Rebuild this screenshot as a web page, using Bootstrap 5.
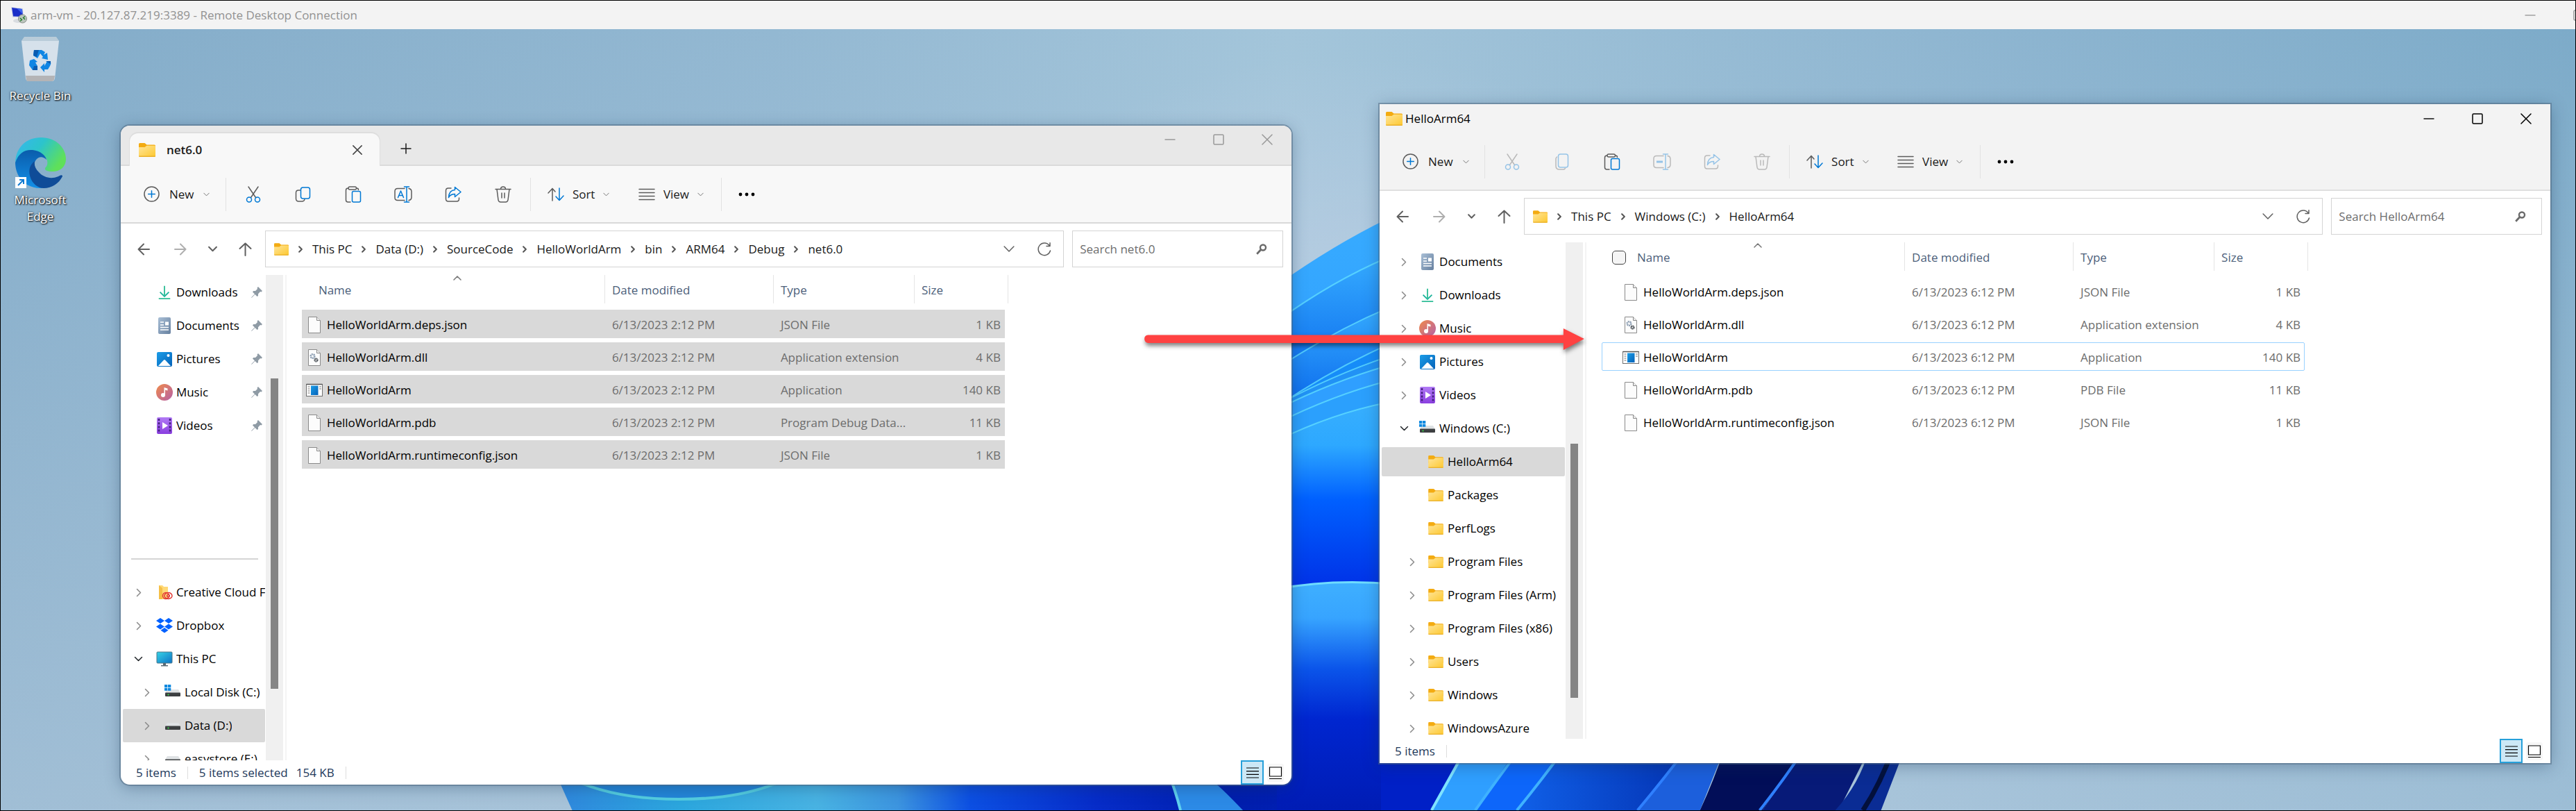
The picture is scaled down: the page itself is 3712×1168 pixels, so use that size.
<!DOCTYPE html>
<html lang="en">
<head>
<meta charset="utf-8">
<meta name="viewport" content="width=device-width, initial-scale=1">
<title>arm-vm - Remote Desktop Connection</title>
<link href="https://cdn.jsdelivr.net/npm/bootstrap@5.3.0/dist/css/bootstrap.min.css" rel="stylesheet">
<style>
  body { font-family: "Open Sans", "Noto Sans", sans-serif; font-size: 17px; line-height: 24px; color: #000; min-height: 100vh; border: 1px solid #000; overflow: hidden; }
  a { color: inherit; text-decoration: none; }
  button { border: 0; background: none; padding: 0; color: #1a1a1a; display: flex; align-items: center; }
  svg { flex: none; display: block; }
  .ln { fill: none; stroke: currentColor; stroke-width: var(--sw, 1.5); stroke-linecap: round; stroke-linejoin: round; vector-effect: non-scaling-stroke; }

  .session-bar { height: 41px; background: #f3f3f3; color: #929292; padding-left: 13px; overflow: hidden; }
  .session-bar button { color: #999; }
  .session-max { margin: 0 -13px 0 54px; }
  .desktop { position: relative; flex: 1; overflow: hidden; background: #8db2ce; }
  .wallpaper { position: absolute; inset: 0; width: 100%; height: 100%; }

  .shortcuts { position: relative; width: 114px; padding-top: 10px; }
  .shortcuts a { color: #fff; text-shadow: 1px 1px 2px #000, 0 0 3px rgba(0,0,0,.7); }

  .win { position: absolute; width: 45.48%; background: #fff; box-shadow: 0 0 0 2px rgba(80,105,130,.5), 0 4px 22px rgba(20,50,80,.35); overflow: hidden; }
  .win-source { left: 4.66%; top: 139px; bottom: 37px; border-radius: 13px; --bar: #f8f8f8; --nav-w: 209px; --nav-start: 13px; --nav-gap: 15px; --row-h: 48px; --row-m: 0px; --nav-pad: 1px; --thumb-top: 149px; --thumb-h: 447px; --cell-start: 6px; --rule: #d9d9d9; }
  .win-target { left: 53.56%; top: 108px; bottom: 68px; --bar: #f3f3f3; --nav-w: 268px; --nav-start: 22px; --nav-gap: 12px; --row-h: 42px; --row-m: 3px; --nav-pad: 4px; --thumb-top: 290px; --thumb-h: 366px; --cell-start: 30px; --rule: #e0e0e0; }
  .tabstrip, .caption, .toolbar, .address, .status { flex: none; }

  .tabstrip { height: 58px; background: #e8e8e8; box-shadow: inset 0 -2px #dadada; padding-left: 13px; color: #999; }
  .tab { width: 360px; height: 47px; background: #f8f8f8; border-radius: 12px 12px 0 0; box-shadow: 0 -1px 0 1px #dedede; padding: 0 25px 0 13px; font-weight: 600; color: #1a1a1a; clip-path: inset(-3px -3px 0 -3px); }
  .tab-close { color: #444; }
  .tab-add { margin-left: 30px; }
  .caption { height: 42px; background: var(--bar); padding-left: 9px; }
  .win-ctl button { width: 70px; height: 40px; justify-content: center; color: inherit; }

  .toolbar { height: 83px; background: var(--bar); border-bottom: 2px solid var(--rule); padding-left: 33px; color: #5c5c5c; }
  .toolbar button { height: 48px; }
  .toolbar .sep { width: 1px; height: 48px; background: #e2e2e2; }
  .toolbar .ico { width: 72px; justify-content: center; color: #5c5c5c; }
  .toolbar .dim { opacity: .38; }
  .w-new { width: 118px; gap: 14px; }
  .w-sort { width: 131px; gap: 12px; }
  .w-view { width: 119px; gap: 12px; }
  .toolbar .glyph { color: #5c5c5c; }
  .toolbar .chev { width: 9px; height: 6px; color: #777; --sw: 1; }
  .edit-group { margin: 0 3px; }

  .address { padding: 10px 12px 11px 18px; height: 74px; color: #606060; gap: 12px; }
  .history { width: 178px; gap: 31px; padding-left: 6px; --sw: 2; }
  .history button, .boxed button { color: inherit; }
  .boxed { height: 53px; border: 1px solid #d4d4d4; }
  .place { padding: 0 17px 0 12px; }
  .trail { color: #191919; gap: 14px; }
  .trail svg.gt { width: 6px; height: 10px; color: #555; --sw: 2; }
  .trail a { white-space: nowrap; }
  .search { width: 304px; padding: 0 22px 0 10px; }
  .search input { border: 0; outline: 0; min-width: 0; flex: 1; padding: 0; color: #6d6d6d; background: none; }
  .search input::placeholder { color: #6d6d6d; opacity: 1; }

  .panes { min-height: 0; }
  .tree { width: var(--nav-w); padding-top: var(--nav-pad); overflow: hidden; }
  .tree-row { height: var(--row-h); margin: var(--row-m) 1px var(--row-m) 3px; padding-left: var(--nav-start); border-radius: 2px; flex: none; }
  .tree-row .twist { width: 20px; margin-right: var(--nav-gap); color: #8a8a8a; display: flex; justify-content: center; flex: none; }
  .tree-row .pic { width: 24px; margin-right: 5px; display: flex; justify-content: center; flex: none; }
  .tree-row a { white-space: nowrap; overflow: hidden; }
  .tree-row.sub { padding-left: calc(var(--nav-start) + 12px); }
  .tree-row.current { background: #d9d9d9; }
  .tree-row .pin { margin-left: auto; margin-right: 4px; color: #8f9ba5; }
  .tree-gap { height: 144px; flex: none; }
  .tree-rule { height: 48px; flex: none; padding: 23px 11px 0 15px; }
  .tree-rule hr { margin: 0; border-top: 2px solid #d5d5d5; opacity: 1; }
  .track { width: 25px; background: #f0f0f0; }
  .thumb { width: 11px; height: var(--thumb-h); margin: var(--thumb-top) 0 0 7px; background: #858585; }
  .list-pane { border-left: 2px solid #f4f4f4; margin-left: 3px; padding-left: 22px; }

  .files { border-collapse: separate; border-spacing: 0; table-layout: fixed; width: 1018px; color: #6d6d6d; }
  .files th { padding: 0 0 9px; font-weight: 400; color: #4c607a; position: relative; }
  .files th > div { height: 41px; border-right: 1px solid #e5e5e5; padding: 3px 0 0 10px; display: flex; align-items: center; }
  .files th .caret { position: absolute; left: 50%; top: 1px; color: #777; }
  .files td { height: 47px; padding: 2px 0 0 10px; border-bottom: 6px solid transparent; background-clip: padding-box; white-space: nowrap; }
  .files td:last-child { border-right: 5px solid transparent; text-align: right; padding: 2px 6px 0 0; }
  .files td:first-child { padding-left: var(--cell-start); color: #000; }
  .files .fname { display: flex; align-items: center; gap: 6px; }
  .files .picked td { background-color: #d9d9d9; }
  .files .focused { position: relative; }
  .files .focused::after { content: ""; position: absolute; inset: 0 5px 6px 0; border: 1px solid #99d1ff; border-radius: 2px; }
  .files input { appearance: none; width: 20px; height: 20px; border: 1px solid #444; border-radius: 5px; background: #f5f5f5; margin: 0 16px 0 0; }
  .win-source th:first-child > div { padding-left: 24px; }
  .win-target th:first-child > div { padding-left: 15px; }

  .status { height: 35px; padding: 0 11px 0 22px; color: #1e395b; }
  .status .sep { width: 1px; height: 18px; background: #ddd; }
  .status button { height: 35px; justify-content: center; color: #000; }
  .status .on { width: 33px; background: #cce8f6; border: 2px solid #26a0da; margin-right: 5px; }
  .status .off { width: 24px; height: 26px; background: #f7f7f7; border-radius: 3px; }
  .annotation { position: absolute; left: 44.4%; width: 17.25%; top: 426px; overflow: visible; filter: drop-shadow(1px 4px 3px rgba(0,0,0,.5)); }
</style>
</head>
<body class="d-flex flex-column">

<svg width="0" height="0" class="position-absolute" aria-hidden="true">
  <defs>
    <linearGradient id="gFold" x1="0" y1="0" x2="1" y2="1"><stop offset="0" stop-color="#ffe59a"/><stop offset="1" stop-color="#fdc82f"/></linearGradient>
    <linearGradient id="gDoc" x1="0" y1="0" x2="1" y2="1"><stop offset="0" stop-color="#a9bfd6"/><stop offset="1" stop-color="#66809f"/></linearGradient>
    <linearGradient id="gPic" x1="0" y1="0" x2="1" y2="1"><stop offset="0" stop-color="#1b9de8"/><stop offset="1" stop-color="#0562b8"/></linearGradient>
    <linearGradient id="gMus" x1="0" y1="0" x2="1" y2="1"><stop offset="0" stop-color="#f08a4a"/><stop offset="1" stop-color="#b561a8"/></linearGradient>
    <linearGradient id="gVid" x1="0" y1="0" x2="0" y2="1"><stop offset="0" stop-color="#b17af5"/><stop offset="1" stop-color="#8a3ee0"/></linearGradient>
    <linearGradient id="gPc" x1="0" y1="0" x2="1" y2="1"><stop offset="0" stop-color="#35d3e6"/><stop offset="1" stop-color="#0d73c6"/></linearGradient>
    <symbol id="folder" viewBox="0 0 24 20"><path d="M0 1.500Q0 0 1.500 0H8.500L11.500 2.500H22.500Q24 2.500 24 4V12H0Z" fill="#f3ab12"/><path d="M0 6H8.500L11.500 3.700H22.800Q24 3.700 24 4.900V18.500Q24 20 22.500 20H1.500Q0 20 0 18.500Z" fill="url(#gFold)"/><path d="M0 18.500H24Q24 20 22.500 20H1.500Q0 20 0 18.500Z" fill="#eab02a"/></symbol>
    <symbol id="chev" viewBox="0 0 12 8"><path class="ln" d="M1 1.500 6 6.500 11 1.500"/></symbol>
    <symbol id="gt" viewBox="0 0 8 12"><path class="ln" d="M1.500 1 6.500 6 1.500 11"/></symbol>
    <symbol id="plus-circle" viewBox="0 0 24 24"><circle class="ln" cx="12" cy="12" r="11"/><path class="ln" d="M12 7V17M7 12H17" style="stroke:#0078d4"/></symbol>
    <symbol id="cut" viewBox="0 0 24 24"><path class="ln" d="M5 1 15.500 16.500M19 1 8.500 16.500"/><g style="color:#0078d4"><circle class="ln" cx="6" cy="19.500" r="3.500"/><circle class="ln" cx="18" cy="19.500" r="3.500"/></g></symbol>
    <symbol id="copy" viewBox="0 0 24 24"><path class="ln" d="M7.500 6H5Q1.500 6 1.500 9.500V18Q1.500 22 5.500 22H10Q13.500 22 14 19"/><rect class="ln" x="8.500" y="2" width="13" height="16" rx="3" style="stroke:#0078d4"/></symbol>
    <symbol id="copy2" viewBox="0 0 24 24"><path class="ln" d="M4.500 5Q3 6 3 8V18Q3 23 8 23H13Q15.500 23 16.500 21.500"/><rect class="ln" x="6.500" y="1" width="14" height="19" rx="3" style="stroke:#0078d4"/></symbol>
    <symbol id="paste" viewBox="0 0 24 24"><path class="ln" d="M5 3H4.500Q1.500 3 1.500 6V20Q1.500 23 4.500 23H8M17 3Q19.500 3 19.500 5.500M7 1H14.500Q16.500 1 16.500 3T14.500 5H7Q5 5 5 3T7 1"/><rect class="ln" x="10.500" y="7.500" width="12" height="15.500" rx="2" style="stroke:#0078d4"/></symbol>
    <symbol id="rename" viewBox="0 0 26 24"><path class="ln" d="M15 3.500H5Q1 3.500 1 7.500V16.500Q1 20.500 5 20.500H15M21 3.500Q25 4 25 8V16Q25 20 21 20.500"/><path class="ln" d="M18 1V23M14.500 1H21.500M14.500 23H21.500M5.500 16.500 9.500 7 13.500 16.500M7 13.500H12" style="stroke:#0078d4"/></symbol>
    <symbol id="rename2" viewBox="0 0 26 24"><path class="ln" d="M15 3.500H5Q1 3.500 1 7.500V16.500Q1 20.500 5 20.500H15M21 3.500Q25 4 25 8V16Q25 20 21 20.500"/><path class="ln" d="M18 1V23M14.500 1H21.500M14.500 23H21.500" style="stroke:#0078d4"/><path d="M5 10.500H14V13.500H5Z" fill="#0078d4"/></symbol>
    <symbol id="share" viewBox="0 0 24 24"><path class="ln" d="M9 3H5Q1.500 3 1.500 6.500V18.500Q1.500 22 5 22H17Q20.500 22 20.500 18.500V17"/><path class="ln" d="M14.500 1.500 23 8.500 14.500 15.500V11.500Q8 11.500 5.500 16.500 6 6 14.500 5.500Z" style="stroke:#0078d4"/></symbol>
    <symbol id="trash" viewBox="0 0 24 24"><path class="ln" d="M1 4.500H23M8.500 4.500Q8.500 1 12 1T15.500 4.500M3 4.500 5 20Q5.500 23 8.500 23H15.500Q18.500 23 19 20L21 4.500M10 10V17M14 10V17"/></symbol>
    <symbol id="sort" viewBox="0 0 24 20"><path class="ln" d="M7 19V1.500M1 8 7 1.500 11 6"/><path class="ln" d="M17 1V18.500M12 13 17 18.500 23 12" style="stroke:#0078d4"/></symbol>
    <symbol id="view" viewBox="0 0 24 18"><path class="ln" d="M1 1.500H23M1 6.500H23M1 11.500H23M1 16.500H23"/></symbol>
    <symbol id="more" viewBox="0 0 24 6"><circle cx="3" cy="3" r="2.400"/><circle cx="12" cy="3" r="2.400"/><circle cx="21" cy="3" r="2.400"/></symbol>
    <symbol id="left" viewBox="0 0 18 18"><path class="ln" d="M17 9H1.500M9 1.500 1.500 9 9 16.500"/></symbol>
    <symbol id="right" viewBox="0 0 18 18"><path class="ln" d="M1 9H16.500M9 1.500 16.500 9 9 16.500"/></symbol>
    <symbol id="up" viewBox="0 0 18 20"><path class="ln" d="M9 19V1.500M1 9 9 1.500 17 9"/></symbol>
    <symbol id="reload" viewBox="0 0 20 20"><path class="ln" d="M18.500 12A8.800 8.800 0 1 1 17 4.500M18 .8V5.500H13"/></symbol>
    <symbol id="lens" viewBox="0 0 16 16"><circle cx="10" cy="5.500" r="4" fill="none" stroke="#6a6a6a" stroke-width="2.400"/><path d="M7 8.500 1.200 14.800" stroke="#6a6a6a" stroke-width="2.800"/></symbol>
    <symbol id="minus" viewBox="0 0 16 16"><path d="M.5 8H15.500" stroke="currentColor" stroke-width="1.400"/></symbol>
    <symbol id="square" viewBox="0 0 16 16"><rect class="ln" x="1" y="1" width="14" height="14" rx="1.500"/></symbol>
    <symbol id="cross" viewBox="0 0 16 16"><path class="ln" d="M1 1 15 15M15 1 1 15"/></symbol>
    <symbol id="downloads" viewBox="0 0 24 24"><path d="M5 11.500 12 18.500 19 11.500" fill="none" stroke="#1fb59c" stroke-width="2"/><path d="M11 2H13V18H11ZM3 21H21V23H3Z" fill="#2ebd96"/></symbol>
    <symbol id="documents" viewBox="0 0 24 24"><rect x="3" width="18" height="24" rx="2" fill="url(#gDoc)"/><path d="M6 7H11M6 11H11M6 14.500H18M6 18H18" stroke="#fff" stroke-width="1.600"/><rect x="13" y="6.500" width="5" height="5" fill="#fff"/></symbol>
    <symbol id="pictures" viewBox="0 0 24 24"><rect x="1" y="2" width="22" height="21" rx="2" fill="url(#gPic)"/><path d="M3 22 11 13.500Q12 12.500 13 13.500L21 22Z" fill="#fff"/><circle cx="17.500" cy="7" r="2" fill="#fff"/></symbol>
    <symbol id="music" viewBox="0 0 24 24"><circle cx="12" cy="12" r="12" fill="url(#gMus)"/><circle cx="10" cy="16" r="3" fill="#fff"/><path d="M11.500 5 16.500 6.500V9.500L13 8.500V16H11.500Z" fill="#fff"/></symbol>
    <symbol id="videos" viewBox="0 0 24 24"><rect x="1" width="22" height="24" rx="2" fill="url(#gVid)"/><path d="M4 2V23M20 2V23" stroke="#43207c" stroke-width="2.500" stroke-dasharray="3 2.200"/><path d="M9 7 17 12 9 17Z" fill="#fff"/></symbol>
    <symbol id="pin" viewBox="0 0 16 16"><path d="M10 0 16 6 14.500 7.500 13 7 10 10.200 10 13 8.500 14 5.500 11 1 15.500 0 16 .5 15 5 10.500 2 7.500 3.200 6 6 6 9 3 8.500 1.500Z" fill="currentColor"/></symbol>
    <symbol id="ccloud" viewBox="0 0 24 24"><path d="M4 2H9L11 4H17V22H4Z" fill="#ffd978"/><path d="M4 2 9 6V22H4Z" fill="#f5bf47"/><g fill="none" stroke="#e23a35" stroke-width="1.500"><circle cx="14" cy="17" r="4.500"/><ellipse cx="17.500" cy="17" rx="5.500" ry="4.500"/><circle cx="17.500" cy="17" r="1.800"/></g></symbol>
    <symbol id="dropbox" viewBox="0 0 24 22"><path fill="#0061ff" d="M6 0 12 4 6 8 0 4ZM18 0 24 4 18 8 12 4ZM6 8.500 12 12.500 6 16.500 0 12.500ZM18 8.500 24 12.500 18 16.500 12 12.500ZM6.500 17.800 12 14 17.500 17.800 12 21.500Z"/></symbol>
    <symbol id="pc" viewBox="0 0 24 24"><rect x="1" y="2" width="22" height="16" rx="1" fill="url(#gPc)" stroke="#4b7688"/><path d="M10 18H14V21H17V22.500H7V21H10Z" fill="#5b6b75"/></symbol>
    <symbol id="drive" viewBox="0 0 24 24"><path d="M4 8H20L23 13H1Z" fill="#dfe2e4"/><rect x="1" y="12.500" width="22" height="5.500" rx="1" fill="#3c3f41"/><circle cx="5.500" cy="15.500" r="1.100" fill="#3be04a"/></symbol>
    <symbol id="sysdrive" viewBox="0 0 24 24"><path d="M4 8H20L23 13H1Z" fill="#dfe2e4"/><rect x="1" y="12.500" width="22" height="5.500" rx="1" fill="#3c3f41"/><circle cx="5.500" cy="15.500" r="1.100" fill="#3be04a"/><path d="M0 1H4.300V5H0ZM5 1H9.300V5H5ZM0 5.700H4.300V9.700H0ZM5 5.700H9.300V9.700H5Z" fill="#1089df"/></symbol>
    <symbol id="page" viewBox="0 0 24 24"><path d="M3.500.5H15.500L20.500 5.500V23.500H3.500Z" fill="#fcfcfc" stroke="#8a8a8a"/><path d="M15.500.5V5.500H20.500" fill="#eee" stroke="#8a8a8a"/></symbol>
    <symbol id="dll" viewBox="0 0 24 24"><use href="#page" width="24" height="24"/><circle cx="9.500" cy="10" r="2.800" fill="none" stroke="#8d9fb3" stroke-width="2.600" stroke-dasharray="2 .8"/><circle cx="14.500" cy="15.500" r="2" fill="none" stroke="#4c5258" stroke-width="2.200" stroke-dasharray="1.600 .5"/></symbol>
    <symbol id="exe" viewBox="0 0 24 24"><rect x=".5" y="3.500" width="23" height="17" fill="#fff" stroke="#707070"/><path d="M.5 3.500H23.500" stroke="#555" stroke-width="1.500"/><rect x="7" y="5.500" width="10.500" height="13.500" fill="url(#gPic)"/><path d="M2.500 7H5.500M2.500 10H5.500M2.500 13H5.500M2.500 16H5.500M19 7H22M19 10H22" stroke="#777" stroke-width="1"/></symbol>
    <symbol id="details" viewBox="0 0 20 20"><path d="M1 3H19M1 7.700H19M1 12.300H19M1 17H19" stroke="#000" stroke-width="1.200"/></symbol>
    <symbol id="tiles" viewBox="0 0 20 20"><path d="M1.500 2H18.500V15H1.500ZM1 18.500H19" fill="#fff" stroke="#000" stroke-width="1.200"/></symbol>
  </defs>
</svg>

<header class="session-bar d-flex align-items-center">
  <svg width="26" height="24" viewBox="0 0 26 24" aria-hidden="true"><path d="M2 0 19 2 20 15 4 15Z" fill="#d5d9e6"/><path d="M3 1 18 3 19 14 5 13.500Z" fill="#1c2fc8"/><path d="M10 2 18 3 18.500 10Z" fill="#3e66f0"/><ellipse cx="12" cy="20" rx="7" ry="3" fill="#d9dce0"/><circle cx="18.500" cy="17" r="6" fill="#bcc5bd" stroke="#8a918b"/><path d="M15 16 17.500 18.500 15 20.500M22 13.500 19.500 15.500 22 18" fill="none" stroke="#257d2c" stroke-width="1.400"/></svg>
  <span class="ms-1 me-auto">arm-vm - 20.127.87.219:3389 - Remote Desktop Connection</span>
  <button aria-label="Minimize session"><svg width="16" height="16"><use href="#minus"/></svg></button>
  <button aria-label="Restore session" class="session-max"><svg width="16" height="16"><use href="#square"/></svg></button>
</header>

<main class="desktop">
  <svg class="wallpaper" viewBox="0 42 3712 1126" preserveAspectRatio="none" aria-hidden="true">
    <defs>
      <linearGradient id="sky"><stop offset="0" stop-color="#83acc9"/><stop offset=".3" stop-color="#93b8d2"/><stop offset=".5" stop-color="#a3c5da"/><stop offset=".75" stop-color="#8fb6d1"/><stop offset="1" stop-color="#7dabc9"/></linearGradient>
      <linearGradient id="haze" x1="0" y1="0" x2="0" y2="1"><stop offset="0" stop-color="#c4d4e4" stop-opacity="0"/><stop offset="1" stop-color="#c4d4e4" stop-opacity=".45"/></linearGradient>
      <radialGradient id="glow"><stop offset="0" stop-color="#c4d2e8" stop-opacity=".5"/><stop offset="1" stop-color="#c4d2e8" stop-opacity="0"/></radialGradient>
      <linearGradient id="p1" x1="0" y1="0" x2="0" y2="1"><stop offset="0" stop-color="#37abff"/><stop offset="1" stop-color="#2f9dff"/></linearGradient>
      <linearGradient id="p2" x1="0" y1="0" x2="0" y2="1"><stop offset="0" stop-color="#35abff"/><stop offset=".65" stop-color="#0f70ee"/><stop offset="1" stop-color="#0a60e4"/></linearGradient>
      <linearGradient id="core" gradientUnits="userSpaceOnUse" x1="0" y1="590" x2="0" y2="850"><stop offset="0" stop-color="#36aefe"/><stop offset=".2" stop-color="#2da8ff"/><stop offset=".5" stop-color="#0060ff"/><stop offset="1" stop-color="#0030e6"/></linearGradient>
      <linearGradient id="low" gradientUnits="userSpaceOnUse" x1="0" y1="838" x2="0" y2="1168"><stop offset="0" stop-color="#3fb0ff"/><stop offset=".16" stop-color="#37a4ff"/><stop offset=".38" stop-color="#0b55ea"/><stop offset=".6" stop-color="#0026d0"/><stop offset="1" stop-color="#001cb4"/></linearGradient>
      <linearGradient id="floor" gradientUnits="userSpaceOnUse" x1="800" y1="0" x2="2100" y2="0"><stop offset="0" stop-color="#2f86dc"/><stop offset=".14" stop-color="#2ba6dd"/><stop offset=".29" stop-color="#48b2e2"/><stop offset=".38" stop-color="#3c94df"/><stop offset=".46" stop-color="#0c4fe2"/><stop offset=".6" stop-color="#062cc8"/><stop offset=".75" stop-color="#001eac"/><stop offset="1" stop-color="#0020c4"/></linearGradient>
      <linearGradient id="petal2"><stop offset="0" stop-color="#1060e8"/><stop offset="1" stop-color="#0434b4"/></linearGradient>
    </defs>
    <rect y="42" width="3712" height="1126" fill="url(#sky)"/>
    <rect y="42" width="3712" height="1126" fill="url(#haze)"/>
    <ellipse cx="1940" cy="420" rx="520" ry="340" fill="url(#glow)"/>
    <path d="M1840 411Q1920 354 2000 315V620H1840Z" fill="url(#p1)"/>
    <path d="M1840 463Q1920 405 2000 371V620H1840Z" fill="url(#p2)"/>
    <path d="M1840 531Q1920 478 2000 444V640H1840Z" fill="url(#p2)"/>
    <path d="M1840 586Q1920 532 2000 497V640H1840Z" fill="#168cf8"/>
    <path d="M1840 584Q1920 541 2000 514V640H1840Z" fill="#2192f5"/>
    <path d="M1840 590Q1920 550 2000 527V640H1840Z" fill="#2f9fff"/>
    <path d="M1840 610Q1920 570 2000 549V640H1840Z" fill="#2ba0fd"/>
    <path d="M1840 635Q1920 596 2000 580V860H1840Z" fill="url(#core)"/>
    <path d="M1840 463Q1920 405 2000 371M1840 531Q1920 478 2000 444M1840 586Q1920 532 2000 497M1840 584Q1920 541 2000 514M1840 590Q1920 550 2000 527M1840 610Q1920 570 2000 549M1840 635Q1920 596 2000 580" fill="none" stroke="#5fdcff" stroke-width="2" opacity=".8"/>
    <path d="M798 1110H2130V1168H824Z" fill="url(#floor)"/>
    <path d="M1840 849Q1920 834 2010 842V1168H1840Z" fill="url(#low)"/>
    <path d="M1840 849Q1920 834 2010 842" fill="none" stroke="#6fdcff" stroke-width="3"/>
    <path d="M1990 1080H2220V1168H1990Z" fill="#0020c6"/>
    <ellipse cx="978" cy="1090" rx="180" ry="62" fill="#2385d8" stroke="#54cde0" stroke-width="4"/>
    <path d="M1682 1110Q1694 1140 1701 1168H1791Q1765 1140 1730 1110Z" fill="#2c8ae6"/><path d="M1682 1110Q1694 1140 1701 1168" fill="none" stroke="#5fd0ee" stroke-width="4"/>
    <path d="M2112 1080Q2090 1120 2063 1168H2126L2186 1080Z" fill="#2f9fff"/>
    <path d="M2190 1080Q2160 1120 2126 1168H2186L2252 1080Z" fill="#0d66fa"/>
    <path d="M2254 1080Q2225 1120 2186 1168H2360L2430 1080Z" fill="url(#petal2)"/>
    <path d="M2430 1080Q2400 1120 2360 1168H2450L2485 1080Z" fill="#1c5fdc"/>
    <path d="M2485 1080Q2470 1125 2450 1168H2540L2600 1080Z" fill="#020e58"/>
    <path d="M2600 1080Q2570 1125 2540 1168H2650L2694 1080Z" fill="#071a78"/>
    <path d="M2694 1080Q2680 1130 2645 1168H2711L2745 1080Z" fill="#0a2c94"/>
    <g fill="none" stroke-width="4"><path d="M2112 1080Q2090 1120 2063 1168" stroke="#7fe3ff"/><path d="M2190 1080Q2160 1120 2126 1168M2254 1080Q2225 1120 2186 1168" stroke="#3fb2ff"/><path d="M2430 1080Q2400 1120 2360 1168M2600 1080Q2570 1125 2536 1168" stroke="#2f80ff"/><path d="M2728 1080Q2710 1130 2685 1168" stroke="#03103c" stroke-width="7"/></g>
  </svg>

  <nav class="shortcuts d-flex flex-column align-items-center" aria-label="Desktop">
    <a href="#" class="d-flex flex-column align-items-center text-center">
      <svg width="56" height="66" viewBox="0 0 56 66" aria-hidden="true"><path d="M5 2H51L55 7 49 61Q48 65 45 65H11Q8 65 7 61L1 7Z" fill="#dfe7ee" opacity=".9"/><path d="M1 7 5 1H51L55 7Z" fill="#b9ccd9"/><path d="M7 57H49L48 63Q47 65 45 65H11Q8 65 8 63Z" fill="#b4b4b6"/><g fill="#0f86e4"><path d="M19 20H30L35 23 33 27 38 24 39 34 30 32 32 30 28 25 24 32 18 28Z"/><path d="M13 35 19 33 24 37 21 38 24 43V49H17L12 42Z"/><path d="M28 45 34 39V43L38 36 43 37Q44 40 42 43L39 48H34V52Z"/></g><path d="M19 20H26L23 30 18 28ZM17 49H24V43H19ZM36 36H43V40Z" fill="#0a5cb0"/></svg>
      <span class="mt-1 pt-1">Recycle Bin</span>
    </a>
    <a href="#" class="d-flex flex-column align-items-center text-center mt-5 w-75">
      <svg width="74" height="74" viewBox="0 0 74 74" aria-hidden="true">
        <defs><linearGradient id="eA" x1="0" y1="0" x2="1" y2=".5"><stop offset="0" stop-color="#37b6f0"/><stop offset=".5" stop-color="#2cc4cb"/><stop offset="1" stop-color="#5fe05a"/></linearGradient><linearGradient id="eB" x1="0" y1="0" x2="0" y2="1"><stop offset="0" stop-color="#0a5cab"/><stop offset="1" stop-color="#1390e8"/></linearGradient></defs>
        <path d="M1 36C2 14 17 0 38 0 60 0 74 15 74 31 74 42 66 49 55 49 47 49 43 47 44 44 50 39 48 28 38 23 24 16 8 22 1 36Z" fill="url(#eA)"/>
        <path d="M1 36C6 22 15 17 26 18 37 19 45 26 46 32 38 24 28 30 28 42 28 55 38 64 52 64 47 71 41 73 37 73 16 73 1 57 1 36Z" fill="url(#eB)"/>
        <path d="M29 34C22 39 20 47 22 55 25 67 34 73 42 73 54 73 64 66 69 56 69 54 67 54 65 55 52 62 40 56 35 50 30 45 28 40 29 34Z" fill="#0f4c98"/>
        <rect x="1" y="57" width="16" height="16" fill="#fff"/><path d="M5 69 13 61M7 61H13V67" fill="none" stroke="#0f79d0" stroke-width="2"/>
      </svg>
      <span class="mt-1">Microsoft Edge</span>
    </a>
  </nav>

  <section class="win win-source d-flex flex-column" aria-label="net6.0">
    <div class="tabstrip d-flex align-items-end">
      <div class="tab d-flex align-items-center">
        <svg width="24" height="20"><use href="#folder"/></svg>
        <span class="ms-3 me-auto">net6.0</span>
        <button class="tab-close" aria-label="Close tab"><svg width="14" height="14"><use href="#cross"/></svg></button>
      </div>
      <button aria-label="New tab" class="tab-add align-self-center mt-2"><svg width="16" height="16" viewBox="0 0 16 16"><path class="ln" d="M8 1V15M1 8H15"/></svg></button>
      <div class="win-ctl d-flex ms-auto align-self-start">
        <button aria-label="Minimize"><svg width="16" height="16"><use href="#minus"/></svg></button>
        <button aria-label="Maximize"><svg width="16" height="16"><use href="#square"/></svg></button>
        <button aria-label="Close"><svg width="16" height="16"><use href="#cross"/></svg></button>
      </div>
    </div>
    <div class="toolbar d-flex align-items-center" role="toolbar">
      <button class="w-new"><svg class="glyph" width="23" height="23"><use href="#plus-circle"/></svg><span>New</span><svg class="chev"><use href="#chev"/></svg></button>
      <span class="sep"></span>
      <div class="edit-group d-flex">
        <button class="ico" aria-label="Cut"><svg width="24" height="24"><use href="#cut"/></svg></button>
        <button class="ico" aria-label="Copy"><svg width="24" height="24"><use href="#copy"/></svg></button>
        <button class="ico" aria-label="Paste"><svg width="24" height="24"><use href="#paste"/></svg></button>
        <button class="ico" aria-label="Rename"><svg width="26" height="24"><use href="#rename"/></svg></button>
        <button class="ico" aria-label="Share"><svg width="24" height="24"><use href="#share"/></svg></button>
        <button class="ico" aria-label="Delete"><svg width="24" height="24"><use href="#trash"/></svg></button>
      </div>
      <span class="sep me-4"></span>
      <button class="w-sort"><svg class="glyph" width="24" height="20"><use href="#sort"/></svg><span>Sort</span><svg class="chev"><use href="#chev"/></svg></button>
      <button class="w-view"><svg class="glyph" width="24" height="18"><use href="#view"/></svg><span>View</span><svg class="chev"><use href="#chev"/></svg></button>
      <span class="sep me-4"></span>
      <button aria-label="See more"><svg width="24" height="6"><use href="#more"/></svg></button>
    </div>
    <div class="address d-flex">
      <div class="history d-flex align-items-center">
        <button aria-label="Back"><svg width="18" height="18"><use href="#left"/></svg></button>
        <button aria-label="Forward" class="opacity-50 ms-1"><svg width="18" height="18"><use href="#right"/></svg></button>
        <button aria-label="Recent locations"><svg width="13" height="9"><use href="#chev"/></svg></button>
        <button aria-label="Up"><svg width="19" height="20"><use href="#up"/></svg></button>
      </div>
      <div class="boxed place d-flex align-items-center flex-fill">
        <nav class="trail d-flex align-items-center" aria-label="Address">
          <svg width="21" height="18"><use href="#folder"/></svg>
          <svg class="gt"><use href="#gt"/></svg><a href="#">This PC</a>
          <svg class="gt"><use href="#gt"/></svg><a href="#">Data (D:)</a>
          <svg class="gt"><use href="#gt"/></svg><a href="#">SourceCode</a>
          <svg class="gt"><use href="#gt"/></svg><a href="#">HelloWorldArm</a>
          <svg class="gt"><use href="#gt"/></svg><a href="#">bin</a>
          <svg class="gt"><use href="#gt"/></svg><a href="#">ARM64</a>
          <svg class="gt"><use href="#gt"/></svg><a href="#">Debug</a>
          <svg class="gt"><use href="#gt"/></svg><a href="#">net6.0</a>
        </nav>
        <button aria-label="Previous locations" class="ms-auto me-4"><svg width="18" height="11"><use href="#chev"/></svg></button>
        <button aria-label="Refresh" class="ms-2"><svg width="20" height="20"><use href="#reload"/></svg></button>
      </div>
      <form class="boxed search d-flex align-items-center"><input type="text" aria-label="Search net6.0" placeholder="Search net6.0"><svg width="16" height="16"><use href="#lens"/></svg></form>
    </div>
    <div class="panes d-flex flex-fill">
      <nav class="tree d-flex flex-column" aria-label="Folders">
        <div class="tree-row d-flex align-items-center"><span class="twist"></span><span class="pic"><svg width="22" height="22"><use href="#downloads"/></svg></span><a href="#">Downloads</a><svg class="pin" width="16" height="16"><use href="#pin"/></svg></div>
        <div class="tree-row d-flex align-items-center"><span class="twist"></span><span class="pic"><svg width="24" height="24"><use href="#documents"/></svg></span><a href="#">Documents</a><svg class="pin" width="16" height="16"><use href="#pin"/></svg></div>
        <div class="tree-row d-flex align-items-center"><span class="twist"></span><span class="pic"><svg width="24" height="24"><use href="#pictures"/></svg></span><a href="#">Pictures</a><svg class="pin" width="16" height="16"><use href="#pin"/></svg></div>
        <div class="tree-row d-flex align-items-center"><span class="twist"></span><span class="pic"><svg width="24" height="24"><use href="#music"/></svg></span><a href="#">Music</a><svg class="pin" width="16" height="16"><use href="#pin"/></svg></div>
        <div class="tree-row d-flex align-items-center"><span class="twist"></span><span class="pic"><svg width="24" height="24"><use href="#videos"/></svg></span><a href="#">Videos</a><svg class="pin" width="16" height="16"><use href="#pin"/></svg></div>
        <div class="tree-gap"></div>
        <div class="tree-rule"><hr></div>
        <div class="tree-row d-flex align-items-center"><span class="twist"><svg width="8" height="13"><use href="#gt"/></svg></span><span class="pic"><svg width="24" height="24"><use href="#ccloud"/></svg></span><a href="#">Creative Cloud F</a></div>
        <div class="tree-row d-flex align-items-center"><span class="twist"><svg width="8" height="13"><use href="#gt"/></svg></span><span class="pic"><svg width="24" height="22"><use href="#dropbox"/></svg></span><a href="#">Dropbox</a></div>
        <div class="tree-row d-flex align-items-center"><span class="twist text-dark"><svg width="13" height="8"><use href="#chev"/></svg></span><span class="pic"><svg width="24" height="24"><use href="#pc"/></svg></span><a href="#">This PC</a></div>
        <div class="tree-row sub d-flex align-items-center"><span class="twist"><svg width="8" height="13"><use href="#gt"/></svg></span><span class="pic"><svg width="24" height="24"><use href="#sysdrive"/></svg></span><a href="#">Local Disk (C:)</a></div>
        <div class="tree-row sub current d-flex align-items-center"><span class="twist"><svg width="8" height="13"><use href="#gt"/></svg></span><span class="pic"><svg width="24" height="24"><use href="#drive"/></svg></span><a href="#">Data (D:)</a></div>
        <div class="tree-row sub d-flex align-items-center"><span class="twist"><svg width="8" height="13"><use href="#gt"/></svg></span><span class="pic"><svg width="24" height="24"><use href="#drive"/></svg></span><a href="#">easystore (E:)</a></div>
      </nav>
      <div class="track"><div class="thumb"></div></div>
      <div class="list-pane flex-fill">
        <table class="files">
          <colgroup><col style="width:437px"><col style="width:243px"><col style="width:203px"><col style="width:135px"></colgroup>
          <thead><tr>
            <th scope="col"><div>Name</div><svg class="caret" width="12" height="7" viewBox="0 0 12 7"><path class="ln" d="M1 6 6 1 11 6"/></svg></th>
            <th scope="col"><div>Date modified</div></th><th scope="col"><div>Type</div></th><th scope="col"><div>Size</div></th>
          </tr></thead>
          <tbody>
            <tr class="picked"><td><span class="fname"><svg width="24" height="24"><use href="#page"/></svg>HelloWorldArm.deps.json</span></td><td>6/13/2023 2:12 PM</td><td>JSON File</td><td>1 KB</td></tr>
            <tr class="picked"><td><span class="fname"><svg width="24" height="24"><use href="#dll"/></svg>HelloWorldArm.dll</span></td><td>6/13/2023 2:12 PM</td><td>Application extension</td><td>4 KB</td></tr>
            <tr class="picked"><td><span class="fname"><svg width="24" height="24"><use href="#exe"/></svg>HelloWorldArm</span></td><td>6/13/2023 2:12 PM</td><td>Application</td><td>140 KB</td></tr>
            <tr class="picked"><td><span class="fname"><svg width="24" height="24"><use href="#page"/></svg>HelloWorldArm.pdb</span></td><td>6/13/2023 2:12 PM</td><td>Program Debug Data...</td><td>11 KB</td></tr>
            <tr class="picked"><td><span class="fname"><svg width="24" height="24"><use href="#page"/></svg>HelloWorldArm.runtimeconfig.json</span></td><td>6/13/2023 2:12 PM</td><td>JSON File</td><td>1 KB</td></tr>
          </tbody>
        </table>
      </div>
    </div>
    <footer class="status d-flex align-items-center">
      <span>5 items</span><span class="sep mx-3"></span><span>5 items selected</span><span class="ms-2 ps-1 me-3">154 KB</span><span class="sep"></span>
      <button class="on ms-auto" aria-label="Details view"><svg width="20" height="20"><use href="#details"/></svg></button>
      <button class="off" aria-label="Large icons view"><svg width="20" height="20"><use href="#tiles"/></svg></button>
    </footer>
  </section>

  <section class="win win-target d-flex flex-column" aria-label="HelloArm64">
    <div class="caption d-flex align-items-center">
      <svg width="24" height="20"><use href="#folder"/></svg><span class="ms-1">HelloArm64</span>
      <div class="win-ctl d-flex ms-auto">
        <button aria-label="Minimize"><svg width="16" height="16"><use href="#minus"/></svg></button>
        <button aria-label="Maximize"><svg width="16" height="16"><use href="#square"/></svg></button>
        <button aria-label="Close"><svg width="16" height="16"><use href="#cross"/></svg></button>
      </div>
    </div>
    <div class="toolbar d-flex align-items-center" role="toolbar">
      <button class="w-new"><svg class="glyph" width="23" height="23"><use href="#plus-circle"/></svg><span>New</span><svg class="chev"><use href="#chev"/></svg></button>
      <span class="sep"></span>
      <div class="edit-group d-flex">
        <button class="ico dim" aria-label="Cut"><svg width="24" height="24"><use href="#cut"/></svg></button>
        <button class="ico dim" aria-label="Copy"><svg width="24" height="24"><use href="#copy2"/></svg></button>
        <button class="ico" aria-label="Paste"><svg width="24" height="24"><use href="#paste"/></svg></button>
        <button class="ico dim" aria-label="Rename"><svg width="26" height="24"><use href="#rename2"/></svg></button>
        <button class="ico dim" aria-label="Share"><svg width="24" height="24"><use href="#share"/></svg></button>
        <button class="ico dim" aria-label="Delete"><svg width="24" height="24"><use href="#trash"/></svg></button>
      </div>
      <span class="sep me-4"></span>
      <button class="w-sort"><svg class="glyph" width="24" height="20"><use href="#sort"/></svg><span>Sort</span><svg class="chev"><use href="#chev"/></svg></button>
      <button class="w-view"><svg class="glyph" width="24" height="18"><use href="#view"/></svg><span>View</span><svg class="chev"><use href="#chev"/></svg></button>
      <span class="sep me-4"></span>
      <button aria-label="See more"><svg width="24" height="6"><use href="#more"/></svg></button>
    </div>
    <div class="address d-flex">
      <div class="history d-flex align-items-center">
        <button aria-label="Back"><svg width="18" height="18"><use href="#left"/></svg></button>
        <button aria-label="Forward" class="opacity-50 ms-1"><svg width="18" height="18"><use href="#right"/></svg></button>
        <button aria-label="Recent locations"><svg width="13" height="7"><use href="#chev"/></svg></button>
        <button aria-label="Up"><svg width="19" height="20"><use href="#up"/></svg></button>
      </div>
      <div class="boxed place d-flex align-items-center flex-fill">
        <nav class="trail d-flex align-items-center" aria-label="Address">
          <svg width="21" height="18"><use href="#folder"/></svg>
          <svg class="gt"><use href="#gt"/></svg><a href="#">This PC</a>
          <svg class="gt"><use href="#gt"/></svg><a href="#">Windows (C:)</a>
          <svg class="gt"><use href="#gt"/></svg><a href="#">HelloArm64</a>
        </nav>
        <button aria-label="Previous locations" class="ms-auto me-4"><svg width="18" height="11"><use href="#chev"/></svg></button>
        <button aria-label="Refresh" class="ms-2"><svg width="20" height="20"><use href="#reload"/></svg></button>
      </div>
      <form class="boxed search d-flex align-items-center"><input type="text" aria-label="Search HelloArm64" placeholder="Search HelloArm64"><svg width="16" height="16"><use href="#lens"/></svg></form>
    </div>
    <div class="panes d-flex flex-fill">
      <nav class="tree d-flex flex-column" aria-label="Folders">
        <div class="tree-row d-flex align-items-center"><span class="twist"><svg width="8" height="13"><use href="#gt"/></svg></span><span class="pic"><svg width="24" height="24"><use href="#documents"/></svg></span><a href="#">Documents</a></div>
        <div class="tree-row d-flex align-items-center"><span class="twist"><svg width="8" height="13"><use href="#gt"/></svg></span><span class="pic"><svg width="22" height="22"><use href="#downloads"/></svg></span><a href="#">Downloads</a></div>
        <div class="tree-row d-flex align-items-center"><span class="twist"><svg width="8" height="13"><use href="#gt"/></svg></span><span class="pic"><svg width="24" height="24"><use href="#music"/></svg></span><a href="#">Music</a></div>
        <div class="tree-row d-flex align-items-center"><span class="twist"><svg width="8" height="13"><use href="#gt"/></svg></span><span class="pic"><svg width="24" height="24"><use href="#pictures"/></svg></span><a href="#">Pictures</a></div>
        <div class="tree-row d-flex align-items-center"><span class="twist"><svg width="8" height="13"><use href="#gt"/></svg></span><span class="pic"><svg width="24" height="24"><use href="#videos"/></svg></span><a href="#">Videos</a></div>
        <div class="tree-row d-flex align-items-center"><span class="twist text-dark"><svg width="13" height="8"><use href="#chev"/></svg></span><span class="pic"><svg width="24" height="24"><use href="#sysdrive"/></svg></span><a href="#">Windows (C:)</a></div>
        <div class="tree-row sub current d-flex align-items-center"><span class="twist"></span><span class="pic"><svg width="22" height="18"><use href="#folder"/></svg></span><a href="#">HelloArm64</a></div>
        <div class="tree-row sub d-flex align-items-center"><span class="twist"></span><span class="pic"><svg width="22" height="18"><use href="#folder"/></svg></span><a href="#">Packages</a></div>
        <div class="tree-row sub d-flex align-items-center"><span class="twist"></span><span class="pic"><svg width="22" height="18"><use href="#folder"/></svg></span><a href="#">PerfLogs</a></div>
        <div class="tree-row sub d-flex align-items-center"><span class="twist"><svg width="8" height="13"><use href="#gt"/></svg></span><span class="pic"><svg width="22" height="18"><use href="#folder"/></svg></span><a href="#">Program Files</a></div>
        <div class="tree-row sub d-flex align-items-center"><span class="twist"><svg width="8" height="13"><use href="#gt"/></svg></span><span class="pic"><svg width="22" height="18"><use href="#folder"/></svg></span><a href="#">Program Files (Arm)</a></div>
        <div class="tree-row sub d-flex align-items-center"><span class="twist"><svg width="8" height="13"><use href="#gt"/></svg></span><span class="pic"><svg width="22" height="18"><use href="#folder"/></svg></span><a href="#">Program Files (x86)</a></div>
        <div class="tree-row sub d-flex align-items-center"><span class="twist"><svg width="8" height="13"><use href="#gt"/></svg></span><span class="pic"><svg width="22" height="18"><use href="#folder"/></svg></span><a href="#">Users</a></div>
        <div class="tree-row sub d-flex align-items-center"><span class="twist"><svg width="8" height="13"><use href="#gt"/></svg></span><span class="pic"><svg width="22" height="18"><use href="#folder"/></svg></span><a href="#">Windows</a></div>
        <div class="tree-row sub d-flex align-items-center"><span class="twist"><svg width="8" height="13"><use href="#gt"/></svg></span><span class="pic"><svg width="22" height="18"><use href="#folder"/></svg></span><a href="#">WindowsAzure</a></div>
      </nav>
      <div class="track"><div class="thumb"></div></div>
      <div class="list-pane flex-fill">
        <table class="files">
          <colgroup><col style="width:437px"><col style="width:243px"><col style="width:203px"><col style="width:135px"></colgroup>
          <thead><tr>
            <th scope="col"><div><input type="checkbox" id="pickAll"><label for="pickAll">Name</label></div><svg class="caret" width="12" height="7" viewBox="0 0 12 7"><path class="ln" d="M1 6 6 1 11 6"/></svg></th>
            <th scope="col"><div>Date modified</div></th><th scope="col"><div>Type</div></th><th scope="col"><div>Size</div></th>
          </tr></thead>
          <tbody>
            <tr><td><span class="fname"><svg width="24" height="24"><use href="#page"/></svg>HelloWorldArm.deps.json</span></td><td>6/13/2023 6:12 PM</td><td>JSON File</td><td>1 KB</td></tr>
            <tr><td><span class="fname"><svg width="24" height="24"><use href="#dll"/></svg>HelloWorldArm.dll</span></td><td>6/13/2023 6:12 PM</td><td>Application extension</td><td>4 KB</td></tr>
            <tr class="focused"><td><span class="fname"><svg width="24" height="24"><use href="#exe"/></svg>HelloWorldArm</span></td><td>6/13/2023 6:12 PM</td><td>Application</td><td>140 KB</td></tr>
            <tr><td><span class="fname"><svg width="24" height="24"><use href="#page"/></svg>HelloWorldArm.pdb</span></td><td>6/13/2023 6:12 PM</td><td>PDB File</td><td>11 KB</td></tr>
            <tr><td><span class="fname"><svg width="24" height="24"><use href="#page"/></svg>HelloWorldArm.runtimeconfig.json</span></td><td>6/13/2023 6:12 PM</td><td>JSON File</td><td>1 KB</td></tr>
          </tbody>
        </table>
      </div>
    </div>
    <footer class="status d-flex align-items-center">
      <span>5 items</span><span class="sep mx-3"></span>
      <button class="on ms-auto" aria-label="Details view"><svg width="20" height="20"><use href="#details"/></svg></button>
      <button class="off" aria-label="Large icons view"><svg width="20" height="20"><use href="#tiles"/></svg></button>
    </footer>
  </section>

  <svg class="annotation" viewBox="0 0 640 40" aria-hidden="true"><path d="M6 14.500Q1 15 1 20T6 26H605V36L635 20 605 5V14.500Z" fill="#ff4242"/></svg>
</main>
<script src="https://cdn.jsdelivr.net/npm/bootstrap@5.3.0/dist/js/bootstrap.bundle.min.js"></script>
</body>
</html>
